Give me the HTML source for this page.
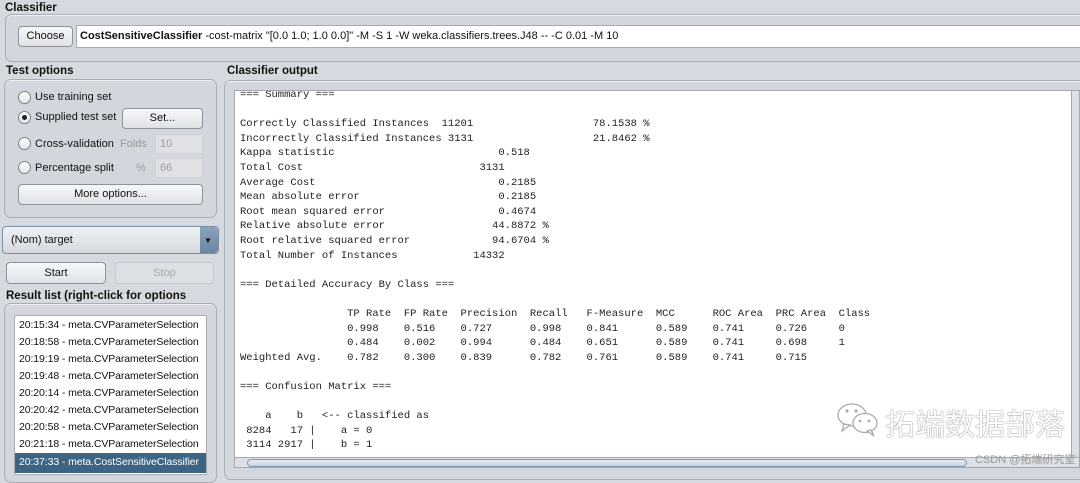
<!DOCTYPE html>
<html><head><meta charset="utf-8"><style>
*{box-sizing:border-box;margin:0;padding:0}
body{width:1080px;height:468px;overflow:hidden;background:#d6d9df;font-family:"Liberation Sans",Arial,sans-serif;font-size:11px;color:#111;position:relative}
.a{position:absolute;white-space:nowrap}
.lbl{font-weight:bold;font-size:11.5px;color:#111}
.grp{border:1px solid #a9adb4;border-radius:7px;background:#d3d6dc;box-shadow:inset 0 1px 0 #eef0f3}
.btn{border:1px solid #8e939a;border-radius:4px;background:linear-gradient(#f6f7f9,#dfe2e7);text-align:center;font-size:11px;line-height:18px}
.radio{width:13px;height:13px;border-radius:50%;border:1px solid #7c8189;background:linear-gradient(#fff,#e4e6ea)}
.field{background:#dfe1e5;border:1px solid #cfd2d6;color:#9a9da2;padding-left:4px;line-height:18px}
pre.out{position:absolute;white-space:pre;font-family:"Liberation Mono",monospace;font-size:10.5px;line-height:14.6px;color:#222}
.item{position:absolute;left:4px;font-size:10.5px;letter-spacing:-0.1px;color:#111;white-space:nowrap}
</style></head><body>
<div class="a lbl" style="left:5px;top:2px">Classifier</div>
<div class="a grp" style="left:5px;top:14px;width:1090px;height:48px"></div>
<div class="a btn" style="left:18px;top:26px;width:55px;height:21px">Choose</div>
<div class="a" style="left:76px;top:25px;width:1010px;height:23px;background:#fff;border:1px solid #a7abb2;padding-left:3px;line-height:21px;font-size:11px;white-space:nowrap"><b>CostSensitiveClassifier</b> -cost-matrix "[0.0 1.0; 1.0 0.0]" -M -S 1 -W weka.classifiers.trees.J48 -- -C 0.01 -M 10</div>

<div class="a lbl" style="left:6px;top:65px">Test options</div>
<div class="a grp" style="left:4px;top:79px;width:213px;height:139px"></div>
<div class="a radio" style="left:18px;top:91px"></div><div class="a" style="left:35px;top:91px">Use training set</div>
<div class="a radio" style="left:18px;top:111px"></div><div class="a" style="left:22px;top:115px;width:5px;height:5px;border-radius:50%;background:#222"></div><div class="a" style="left:35px;top:111px">Supplied test set</div>
<div class="a btn" style="left:122px;top:108px;width:81px;height:21px">Set...</div>
<div class="a radio" style="left:18px;top:137px"></div><div class="a" style="left:35px;top:138px">Cross-validation</div>
<div class="a" style="left:120px;top:138px;color:#999">Folds</div>
<div class="a field" style="left:155px;top:134px;width:48px;height:20px">10</div>
<div class="a radio" style="left:18px;top:161px"></div><div class="a" style="left:35px;top:162px">Percentage split</div>
<div class="a" style="left:136px;top:162px;color:#999">%</div>
<div class="a field" style="left:155px;top:158px;width:48px;height:20px">66</div>
<div class="a btn" style="left:18px;top:184px;width:185px;height:21px">More options...</div>

<div class="a" style="left:2px;top:226px;width:217px;height:28px;border:1px solid #7b8ea3;border-radius:4px;background:linear-gradient(#eef0f3,#d5d9df);padding-left:8px;line-height:26px">(Nom) target</div>
<div class="a" style="left:200px;top:227px;width:18px;height:26px;background:linear-gradient(#8aa2bb,#6a86a3);border-radius:0 4px 4px 0"></div>
<div class="a" style="left:204px;top:236px;font-size:8px;color:#111">▼</div>
<div class="a btn" style="left:6px;top:262px;width:100px;height:22px;line-height:20px">Start</div>
<div class="a btn" style="left:115px;top:262px;width:99px;height:22px;line-height:20px;color:#aaa;border-color:#c5c8cd;background:#dcdfe3">Stop</div>
<div class="a lbl" style="left:6px;top:290px">Result list (right-click for options</div>
<div class="a grp" style="left:4px;top:303px;width:213px;height:180px"></div>
<div class="a" style="left:14px;top:315px;width:193px;height:160px;background:#fff;border:1px solid #a9adb4;overflow:hidden">
<div class="item" style="top:3px">20:15:34 - meta.CVParameterSelection</div>
<div class="item" style="top:20px">20:18:58 - meta.CVParameterSelection</div>
<div class="item" style="top:37px">20:19:19 - meta.CVParameterSelection</div>
<div class="item" style="top:54px">20:19:48 - meta.CVParameterSelection</div>
<div class="item" style="top:71px">20:20:14 - meta.CVParameterSelection</div>
<div class="item" style="top:88px">20:20:42 - meta.CVParameterSelection</div>
<div class="item" style="top:105px">20:20:58 - meta.CVParameterSelection</div>
<div class="item" style="top:122px">20:21:18 - meta.CVParameterSelection</div>
<div class="a" style="left:0;top:137px;width:191px;height:20px;background:#3d6483"></div>
<div class="item" style="top:140px;color:#fff">20:37:33 - meta.CostSensitiveClassifier</div>
</div>

<div class="a lbl" style="left:227px;top:65px">Classifier output</div>
<div class="a grp" style="left:224px;top:80px;width:870px;height:400px"></div>
<div class="a" style="left:234px;top:90px;width:846px;height:378px;background:#fff;border:1px solid #a4a8ae;overflow:hidden">
<pre class="out" style="left:5px;top:-3px">=== Summary ===

Correctly Classified Instances  11201                   78.1538 %
Incorrectly Classified Instances 3131                   21.8462 %
Kappa statistic                          0.518
Total Cost                            3131
Average Cost                             0.2185
Mean absolute error                      0.2185
Root mean squared error                  0.4674
Relative absolute error                 44.8872 %
Root relative squared error             94.6704 %
Total Number of Instances            14332

=== Detailed Accuracy By Class ===

                 TP Rate  FP Rate  Precision  Recall   F-Measure  MCC      ROC Area  PRC Area  Class
                 0.998    0.516    0.727      0.998    0.841      0.589    0.741     0.726     0
                 0.484    0.002    0.994      0.484    0.651      0.589    0.741     0.698     1
Weighted Avg.    0.782    0.300    0.839      0.782    0.761      0.589    0.741     0.715

=== Confusion Matrix ===

    a    b   &lt;-- classified as
 8284   17 |    a = 0
 3114 2917 |    b = 1</pre>
<div class="a" style="right:0;top:0;width:8px;height:368px;background:#dde0e4;border-left:1px solid #a4a8ae"></div>
<div class="a" style="left:0;bottom:0;width:846px;height:10px;background:#dde0e4;border-top:1px solid #a4a8ae"></div>
<div class="a" style="left:12px;bottom:0;width:720px;height:8px;border:1px solid #7f96ad;border-radius:5px;background:linear-gradient(#e9eef4,#c5d2df)"></div>
</div>
<svg class="a" style="left:836px;top:400px" width="46" height="38" viewBox="0 0 46 38"><g fill="#fff" stroke="#aaa" stroke-width="1.3"><ellipse cx="16" cy="15" rx="14" ry="11"/><path d="M8 24 L6 31 L14 25Z"/><ellipse cx="29" cy="23" rx="12" ry="9.5"/><path d="M35 30 L38 36 L31 31Z"/></g><g fill="#aaa"><circle cx="11" cy="11" r="1.6"/><circle cx="20" cy="11" r="1.6"/><circle cx="24" cy="21" r="1.4"/><circle cx="33" cy="21" r="1.4"/></g></svg>
<div class="a" style="left:885px;top:400px;font-size:30px;color:#fff;text-shadow:0 0 1px #777,0 0 1px #777;font-family:'Liberation Sans','Noto Sans CJK SC',sans-serif">拓端数据部落</div>
<div class="a" style="left:975px;top:451px;font-size:11px;color:#999;font-family:'Liberation Sans','Noto Sans CJK SC',sans-serif">CSDN @拓端研究室</div>
</body></html>
